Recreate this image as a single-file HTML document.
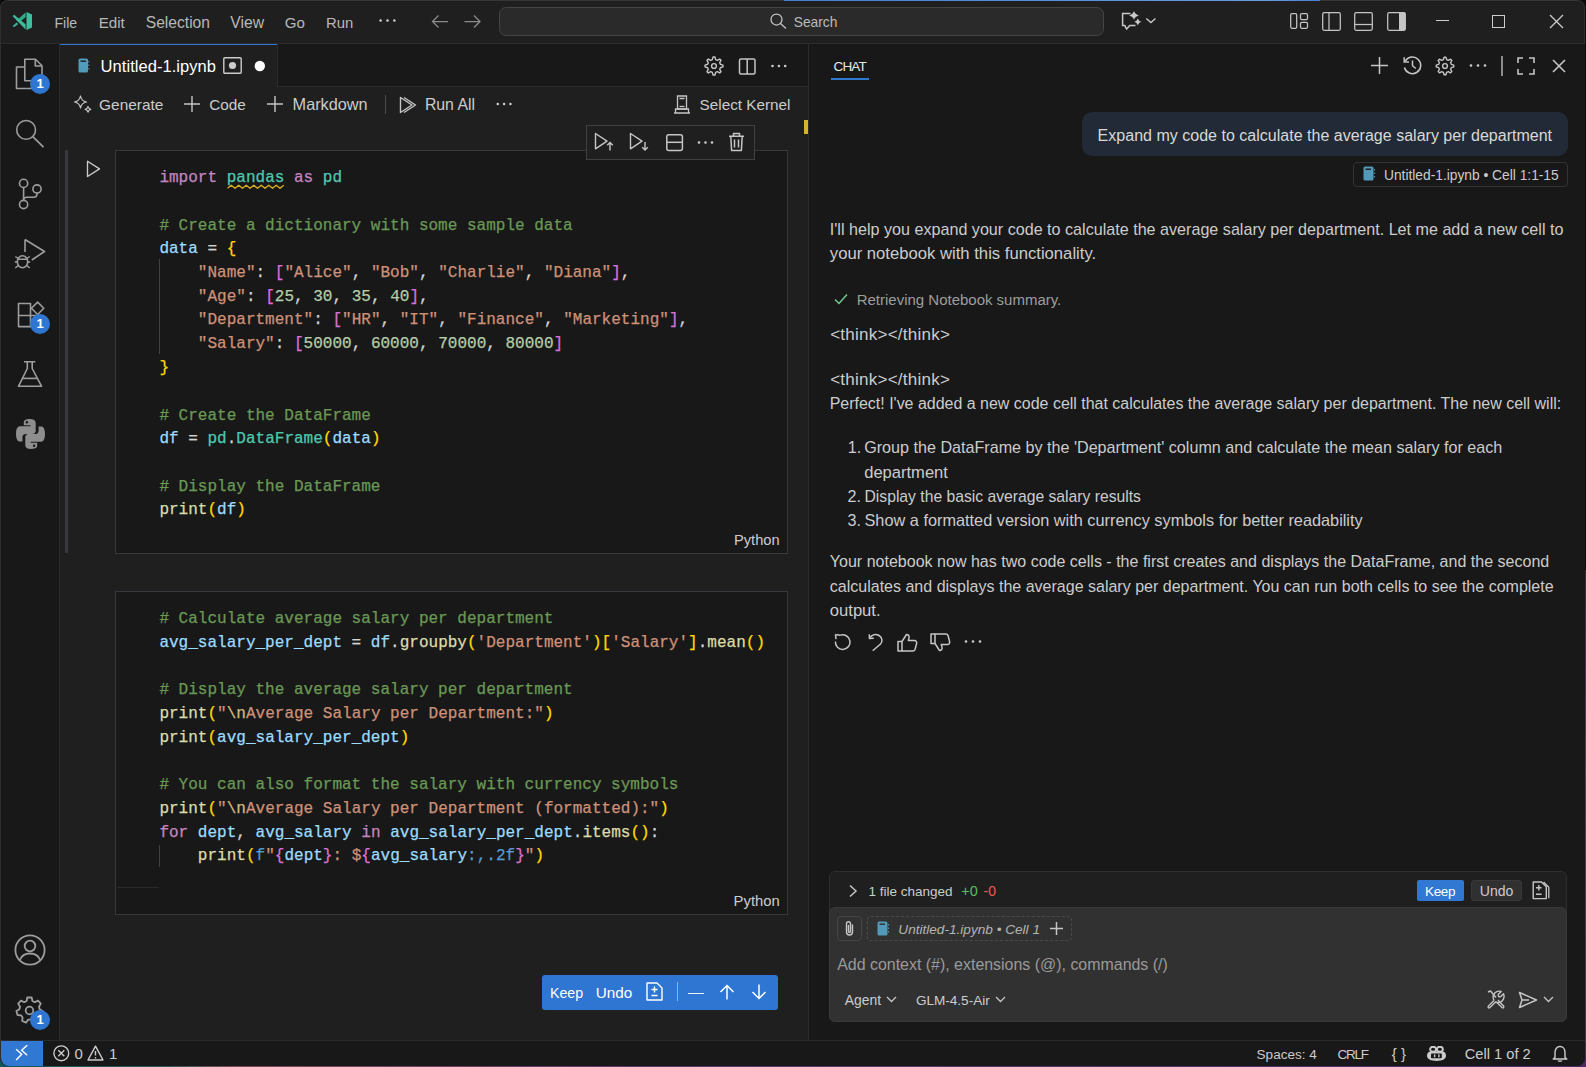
<!DOCTYPE html>
<html><head><meta charset="utf-8"><style>
html,body{margin:0;padding:0;width:1586px;height:1067px;overflow:hidden;background:#0d0d10}
.a{position:absolute;display:block}
.t{position:absolute;white-space:pre;margin:0;padding:0}
.s{font-family:"Liberation Sans", sans-serif}
.m{font-family:"Liberation Mono", monospace;-webkit-text-stroke:0.25px currentColor}
</style></head><body>
<div class="a" style="left:0px;top:0px;width:1586px;height:1067px;background:#0c0c0e"></div>
<div class="a" style="left:1585px;top:570px;width:1px;height:497px;background:linear-gradient(180deg,#3a2a4a,#5a3a78 40%,#4a2a68)"></div>
<div class="a" style="left:0px;top:600px;width:1px;height:467px;background:linear-gradient(180deg,#6a9ab8 0%,#6a9ab8 12%,#2a3a3a 13%,#2a4a4a 70%,#2a6a6a 100%)"></div>
<div class="a" style="left:0px;top:1058px;width:1586px;height:9px;background:linear-gradient(90deg,#0d5a5a,#2a5a5a 10%,#7a4a5a 15%,#5a3a6a 40%,#4a2a6a 100%)"></div>
<div class="a" style="left:0px;top:0px;width:1585px;height:1066px;background:#1f1f1f;border-radius:8px;overflow:hidden;box-shadow:inset 0 0 0 1px #2e2e2e"></div>
<div class="a" style="left:0px;top:43px;width:1585px;height:1px;background:#2b2b2b"></div>
<div class="a" style="left:8px;top:0px;width:1569px;height:1px;background:#363636"></div>
<div class="a" style="left:784px;top:0px;width:536px;height:1px;background:linear-gradient(90deg,#4a7cd0,#5b8fdc 50%,#6a9ae0 90%,#4a7cd0)"></div>
<div class="a" style="left:1px;top:44px;width:58px;height:996px;background:#181818"></div>
<div class="a" style="left:59px;top:44px;width:1px;height:996px;background:#2b2b2b"></div>
<div class="a" style="left:60px;top:44px;width:748px;height:42px;background:#181818"></div>
<div class="a" style="left:60px;top:86px;width:748px;height:1px;background:#2b2b2b"></div>
<div class="a" style="left:60px;top:44px;width:217px;height:43px;background:#1f1f1f"></div>
<div class="a" style="left:60px;top:44px;width:217px;height:1px;background:#3178d2"></div>
<div class="a" style="left:277px;top:44px;width:1px;height:42px;background:#2b2b2b"></div>
<div class="a" style="left:808px;top:44px;width:1px;height:996px;background:#2b2b2b"></div>
<div class="a" style="left:809px;top:44px;width:776px;height:996px;background:#181818"></div>
<div class="a" style="left:1px;top:1040px;width:1584px;height:26px;background:#181818;border-bottom-left-radius:8px;border-bottom-right-radius:8px"></div>
<div class="a" style="left:1px;top:1040px;width:1584px;height:1px;background:#2b2b2b"></div>
<div class="a" style="left:1px;top:1041px;width:42px;height:25px;background:#3178d2;border-bottom-left-radius:8px"></div>
<svg class="a" style="left:12px;top:11px;" width="21" height="20" viewBox="0 0 21 20" fill="none" stroke="#c5c5c5" stroke-width="1.25"><path d="M14.5 1 L20 3.5 V16.5 L14.5 19 Z" fill="#3fbfa0" stroke="none"/>
<path d="M13.6 1.6 V6.3 L7 11.5 L4.5 9.4 Z" fill="#31a888" stroke="none"/>
<path d="M0.5 5 L2.2 3.8 L13.6 13.2 V18.4 Z" fill="#3cbb9b" stroke="none"/>
<path d="M0.5 15 L4.6 11.5 L6.3 13 L2.2 16.3 Z" fill="#34b090" stroke="none"/></svg>
<div class="t s" style="left:54.50px;top:16.00px;font-size:14.078px;line-height:14.078px;color:#b8b8b8;letter-spacing:-0.000px;">File</div>
<div class="t s" style="left:98.70px;top:15.00px;font-size:15.152px;line-height:15.152px;color:#b8b8b8;letter-spacing:0.000px;">Edit</div>
<div class="t s" style="left:145.80px;top:15.00px;font-size:15.601px;line-height:15.601px;color:#b8b8b8;letter-spacing:0.000px;">Selection</div>
<div class="t s" style="left:230.30px;top:15.00px;font-size:15.749px;line-height:15.749px;color:#b8b8b8;letter-spacing:0.000px;">View</div>
<div class="t s" style="left:284.70px;top:15.00px;font-size:15.131px;line-height:15.131px;color:#b8b8b8;letter-spacing:0.000px;">Go</div>
<div class="t s" style="left:326.10px;top:16.00px;font-size:14.877px;line-height:14.877px;color:#b8b8b8;letter-spacing:0.000px;">Run</div>
<svg class="a" style="left:379px;top:18px;" width="17" height="5" viewBox="0 0 17 5" fill="none" stroke="#c5c5c5" stroke-width="1.25"><circle cx="1.6" cy="2.5" r="1.3" fill="#cccccc" stroke="none"/><circle cx="8.5" cy="2.5" r="1.3" fill="#cccccc" stroke="none"/><circle cx="15.4" cy="2.5" r="1.3" fill="#cccccc" stroke="none"/></svg>
<svg class="a" style="left:431px;top:14px;" width="18" height="15" viewBox="0 0 18 15" fill="none" stroke="#c5c5c5" stroke-width="1.25"><path d="M1.5 7.5 H17 M7.5 1.5 L1.5 7.5 L7.5 13.5" stroke="#8b8b8b"/></svg>
<svg class="a" style="left:464px;top:14px;" width="18" height="15" viewBox="0 0 18 15" fill="none" stroke="#c5c5c5" stroke-width="1.25"><path d="M0.5 7.5 H16 M10 1.5 L16 7.5 L10 13.5" stroke="#8b8b8b"/></svg>
<div class="a" style="left:499px;top:7px;width:605px;height:29px;background:#2a2a2a;border:1px solid #444444;border-radius:7px;box-sizing:border-box"></div>
<svg class="a" style="left:770px;top:13px;" width="17" height="16" viewBox="0 0 17 16" fill="none" stroke="#c5c5c5" stroke-width="1.25"><circle cx="6.5" cy="6.5" r="5.5"/><path d="M10.5 10.5 L16 15.5"/></svg>
<div class="t s" style="left:793.70px;top:16.00px;font-size:13.796px;line-height:13.796px;color:#bbbbbb;letter-spacing:0.000px;">Search</div>
<svg class="a" style="left:1121px;top:10px;" width="21" height="20" viewBox="0 0 21 20" fill="none" stroke="#c5c5c5" stroke-width="1.25"><path d="M9.5 3.6 H1.6 V15.6 H3.8 L5.6 19 L8.8 15.6 H14.5" stroke-width="1.5" stroke="#c8c8c8"/><path d="M13 1.0 Q14.08 4.43 17.9 5.4 Q14.08 6.37 13 9.8 Q11.92 6.37 8.1 5.4 Q11.92 4.43 13 1.0 Z" fill="#c8c8c8" stroke="none"/><path d="M16.8 8.4 Q17.59 11.05 20.400000000000002 11.8 Q17.59 12.55 16.8 15.200000000000001 Q16.01 12.55 13.200000000000001 11.8 Q16.01 11.05 16.8 8.4 Z" fill="#c8c8c8" stroke="none"/></svg>
<svg class="a" style="left:1145px;top:17px;" width="12" height="7" viewBox="0 0 12 7" fill="none" stroke="#c5c5c5" stroke-width="1.25"><path d="M1.3 1.4 L5.9 5.6 L10.5 1.4" stroke-width="1.4"/></svg>
<svg class="a" style="left:1290px;top:13px;" width="19" height="16" viewBox="0 0 19 16" fill="none" stroke="#c5c5c5" stroke-width="1.25"><rect x="0.7" y="0.7" width="6" height="14.6" rx="1.2"/><rect x="10.5" y="0.7" width="7" height="6" rx="1.2"/><rect x="10.5" y="9.3" width="7" height="6" rx="1.2"/></svg>
<svg class="a" style="left:1322px;top:12px;" width="19" height="19" viewBox="0 0 19 19" fill="none" stroke="#c5c5c5" stroke-width="1.25"><rect x="0.7" y="0.7" width="17.6" height="17.6" rx="1.5"/><path d="M7 0.7 V18.3"/></svg>
<svg class="a" style="left:1354px;top:12px;" width="19" height="19" viewBox="0 0 19 19" fill="none" stroke="#c5c5c5" stroke-width="1.25"><rect x="0.7" y="0.7" width="17.6" height="17.6" rx="1.5"/><path d="M0.7 12.5 H18.3"/></svg>
<svg class="a" style="left:1387px;top:12px;" width="19" height="19" viewBox="0 0 19 19" fill="none" stroke="#c5c5c5" stroke-width="1.25"><rect x="0.7" y="0.7" width="17.6" height="17.6" rx="1.5"/><rect x="12" y="0.7" width="6.3" height="17.6" fill="#c5c5c5" stroke="none"/></svg>
<div class="a" style="left:1436px;top:20px;width:13px;height:1px;background:#cccccc"></div>
<div class="a" style="left:1492px;top:15px;width:13px;height:13px;border:1px solid #cccccc;box-sizing:border-box"></div>
<svg class="a" style="left:1549px;top:14px;" width="15" height="15" viewBox="0 0 15 15" fill="none" stroke="#c5c5c5" stroke-width="1.25"><path d="M1 1 L14 14 M14 1 L1 14" stroke="#cccccc"/></svg>
<svg class="a" style="left:78px;top:58px;" width="12" height="15" viewBox="0 0 12 15" fill="none" stroke="#c5c5c5" stroke-width="1.25"><rect x="0.5" y="0.5" width="9.5" height="14" rx="1.6" fill="#519aba" stroke="none"/><rect x="2.5" y="2.5" width="5.5" height="1.4" fill="#1f1f1f" stroke="none"/><path d="M10.8 3 V4.5 M10.8 6.5 V8 M10.8 10 V11.5" stroke="#519aba" stroke-width="1"/></svg>
<div class="t s" style="left:100.60px;top:59.00px;font-size:16.536px;line-height:16.536px;color:#ffffff;letter-spacing:0.041px;">Untitled-1.ipynb</div>
<svg class="a" style="left:223px;top:57px;" width="19" height="17" viewBox="0 0 19 17" fill="none" stroke="#c5c5c5" stroke-width="1.25"><rect x="0.8" y="0.8" width="17.4" height="15.4" rx="1" stroke="#cccccc" stroke-width="1.4"/><circle cx="9.5" cy="8.5" r="3.6" fill="#cccccc" stroke="none"/></svg>
<svg class="a" style="left:254px;top:60px;" width="12" height="12" viewBox="0 0 12 12" fill="none" stroke="#c5c5c5" stroke-width="1.25"><circle cx="5.8" cy="6" r="5.2" fill="#ffffff" stroke="none"/></svg>
<svg class="a" style="left:703px;top:55px;" width="22" height="22" viewBox="0 0 22 22" fill="none" stroke="#c5c5c5" stroke-width="1.25"><circle cx="11" cy="11" r="2.4" stroke-width="1.4"/><path d="M9.29 4.62 L10.06 2.05 L11.94 2.05 L12.71 4.62 L14.30 5.28 L16.66 4.01 L17.99 5.34 L16.72 7.70 L17.38 9.29 L19.95 10.06 L19.95 11.94 L17.38 12.71 L16.72 14.30 L17.99 16.66 L16.66 17.99 L14.30 16.72 L12.71 17.38 L11.94 19.95 L10.06 19.95 L9.29 17.38 L7.70 16.72 L5.34 17.99 L4.01 16.66 L5.28 14.30 L4.62 12.71 L2.05 11.94 L2.05 10.06 L4.62 9.29 L5.28 7.70 L4.01 5.34 L5.34 4.01 L7.70 5.28 Z" stroke-linejoin="round" stroke-width="1.4"/></svg>
<svg class="a" style="left:738px;top:58px;" width="18" height="17" viewBox="0 0 18 17" fill="none" stroke="#c5c5c5" stroke-width="1.25"><rect x="1.5" y="1" width="15.5" height="15" rx="1.5" stroke-width="1.5"/><path d="M9.2 1 V16" stroke-width="1.5"/></svg>
<svg class="a" style="left:770px;top:64px;" width="18" height="5" viewBox="0 0 18 5" fill="none" stroke="#c5c5c5" stroke-width="1.25"><circle cx="2.5" cy="2" r="1.3" fill="#cccccc" stroke="none"/><circle cx="8.9" cy="2" r="1.3" fill="#cccccc" stroke="none"/><circle cx="15.2" cy="2" r="1.3" fill="#cccccc" stroke="none"/></svg>
<svg class="a" style="left:73px;top:95px;" width="20" height="19" viewBox="0 0 20 19" fill="none" stroke="#c5c5c5" stroke-width="1.25"><path d="M7.5 1 C8.1 4.6 9.6 6.2 13.5 7 C9.6 7.8 8.1 9.4 7.5 13 C6.9 9.4 5.4 7.8 1.5 7 C5.4 6.2 6.9 4.6 7.5 1 Z" stroke-linejoin="round"/><path d="M15 11.5 C15.3 13.2 16 13.9 17.8 14.3 C16 14.7 15.3 15.4 15 17.2 C14.7 15.4 14 14.7 12.2 14.3 C14 13.9 14.7 13.2 15 11.5 Z" stroke-linejoin="round"/></svg>
<div class="t s" style="left:99.10px;top:97.00px;font-size:15.42px;line-height:15.42px;color:#cccccc;letter-spacing:-0.000px;">Generate</div>
<svg class="a" style="left:183px;top:95px;" width="18" height="18" viewBox="0 0 18 18" fill="none" stroke="#c5c5c5" stroke-width="1.25"><path d="M9 1 V17 M1 9 H17" stroke-width="1.4"/></svg>
<div class="t s" style="left:209.30px;top:97.00px;font-size:15.314px;line-height:15.314px;color:#cccccc;letter-spacing:-0.000px;">Code</div>
<svg class="a" style="left:266px;top:95px;" width="18" height="18" viewBox="0 0 18 18" fill="none" stroke="#c5c5c5" stroke-width="1.25"><path d="M9 1 V17 M1 9 H17" stroke-width="1.4"/></svg>
<div class="t s" style="left:292.60px;top:96.00px;font-size:16.282px;line-height:16.282px;color:#cccccc;letter-spacing:-0.000px;">Markdown</div>
<div class="a" style="left:385px;top:95px;width:1px;height:19px;background:#4a4a4a"></div>
<svg class="a" style="left:399px;top:96px;" width="19" height="18" viewBox="0 0 19 18" fill="none" stroke="#c5c5c5" stroke-width="1.25"><path d="M1.5 1.5 L1.5 16.5 L13 9 Z" stroke-linejoin="round" stroke-width="1.4"/><path d="M5 1.5 L16.5 9 L5 16.5" stroke-linejoin="round" stroke-width="1.4"/></svg>
<div class="t s" style="left:424.90px;top:97.00px;font-size:15.848px;line-height:15.848px;color:#cccccc;letter-spacing:0.000px;">Run All</div>
<svg class="a" style="left:496px;top:102px;" width="18" height="5" viewBox="0 0 18 5" fill="none" stroke="#c5c5c5" stroke-width="1.25"><circle cx="1.8" cy="2" r="1.3" fill="#cccccc" stroke="none"/><circle cx="8.1" cy="2" r="1.3" fill="#cccccc" stroke="none"/><circle cx="14.4" cy="2" r="1.3" fill="#cccccc" stroke="none"/></svg>
<svg class="a" style="left:673px;top:95px;" width="18" height="19" viewBox="0 0 18 19" fill="none" stroke="#c5c5c5" stroke-width="1.25"><path d="M4.5 1 H13.5 V14 H4.5 Z M6.5 3.5 H11.5" stroke-width="1.3"/><path d="M6.5 11.5 H11.5" stroke-width="1.3"/><path d="M1 18 H17 M2.5 18 V14 H15.5 V18" stroke-width="1.3"/></svg>
<div class="t s" style="left:699.60px;top:97.00px;font-size:15.284px;line-height:15.284px;color:#cccccc;letter-spacing:-0.000px;">Select Kernel</div>
<div class="a" style="left:804px;top:120px;width:4px;height:14px;background:#d8b32a"></div>
<div class="a" style="left:65px;top:150px;width:3px;height:403px;background:#393940;border-radius:1px"></div>
<div class="a" style="left:115px;top:150px;width:673px;height:404px;background:#181818;border:1px solid #37373d;box-sizing:border-box"></div>
<svg class="a" style="left:86px;top:160px;" width="15" height="18" viewBox="0 0 15 18" fill="none" stroke="#c5c5c5" stroke-width="1.25"><path d="M1.5 1.2 V16.5 L13.5 8.9 Z" stroke="#cccccc" stroke-width="1.35" stroke-linejoin="round"/></svg>
<div class="t m" style="left:159.40px;top:170.00px;font-size:16.03px;line-height:16.03px;color:#d4d4d4;"><span style="color:#c586c0">import</span><span style="color:#d4d4d4"> </span><span style="color:#4ec9b0">pandas</span><span style="color:#d4d4d4"> </span><span style="color:#c586c0">as</span><span style="color:#d4d4d4"> </span><span style="color:#4ec9b0">pd</span></div>
<div class="t m" style="left:159.40px;top:218.00px;font-size:16.03px;line-height:16.03px;color:#d4d4d4;"><span style="color:#6a9955"># Create a dictionary with some sample data</span></div>
<div class="t m" style="left:159.40px;top:241.00px;font-size:16.03px;line-height:16.03px;color:#d4d4d4;"><span style="color:#9cdcfe">data</span><span style="color:#d4d4d4"> = </span><span style="color:#ffd700">{</span></div>
<div class="t m" style="left:159.40px;top:265.00px;font-size:16.03px;line-height:16.03px;color:#d4d4d4;"><span style="color:#d4d4d4">    </span><span style="color:#ce9178">&quot;Name&quot;</span><span style="color:#d4d4d4">: </span><span style="color:#da70d6">[</span><span style="color:#ce9178">&quot;Alice&quot;</span><span style="color:#d4d4d4">, </span><span style="color:#ce9178">&quot;Bob&quot;</span><span style="color:#d4d4d4">, </span><span style="color:#ce9178">&quot;Charlie&quot;</span><span style="color:#d4d4d4">, </span><span style="color:#ce9178">&quot;Diana&quot;</span><span style="color:#da70d6">]</span><span style="color:#d4d4d4">,</span></div>
<div class="t m" style="left:159.40px;top:289.00px;font-size:16.03px;line-height:16.03px;color:#d4d4d4;"><span style="color:#d4d4d4">    </span><span style="color:#ce9178">&quot;Age&quot;</span><span style="color:#d4d4d4">: </span><span style="color:#da70d6">[</span><span style="color:#b5cea8">25</span><span style="color:#d4d4d4">, </span><span style="color:#b5cea8">30</span><span style="color:#d4d4d4">, </span><span style="color:#b5cea8">35</span><span style="color:#d4d4d4">, </span><span style="color:#b5cea8">40</span><span style="color:#da70d6">]</span><span style="color:#d4d4d4">,</span></div>
<div class="t m" style="left:159.40px;top:312.00px;font-size:16.03px;line-height:16.03px;color:#d4d4d4;"><span style="color:#d4d4d4">    </span><span style="color:#ce9178">&quot;Department&quot;</span><span style="color:#d4d4d4">: </span><span style="color:#da70d6">[</span><span style="color:#ce9178">&quot;HR&quot;</span><span style="color:#d4d4d4">, </span><span style="color:#ce9178">&quot;IT&quot;</span><span style="color:#d4d4d4">, </span><span style="color:#ce9178">&quot;Finance&quot;</span><span style="color:#d4d4d4">, </span><span style="color:#ce9178">&quot;Marketing&quot;</span><span style="color:#da70d6">]</span><span style="color:#d4d4d4">,</span></div>
<div class="t m" style="left:159.40px;top:336.00px;font-size:16.03px;line-height:16.03px;color:#d4d4d4;"><span style="color:#d4d4d4">    </span><span style="color:#ce9178">&quot;Salary&quot;</span><span style="color:#d4d4d4">: </span><span style="color:#da70d6">[</span><span style="color:#b5cea8">50000</span><span style="color:#d4d4d4">, </span><span style="color:#b5cea8">60000</span><span style="color:#d4d4d4">, </span><span style="color:#b5cea8">70000</span><span style="color:#d4d4d4">, </span><span style="color:#b5cea8">80000</span><span style="color:#da70d6">]</span></div>
<div class="t m" style="left:159.40px;top:360.00px;font-size:16.03px;line-height:16.03px;color:#d4d4d4;"><span style="color:#ffd700">}</span></div>
<div class="t m" style="left:159.40px;top:408.00px;font-size:16.03px;line-height:16.03px;color:#d4d4d4;"><span style="color:#6a9955"># Create the DataFrame</span></div>
<div class="t m" style="left:159.40px;top:431.00px;font-size:16.03px;line-height:16.03px;color:#d4d4d4;"><span style="color:#9cdcfe">df</span><span style="color:#d4d4d4"> = </span><span style="color:#4ec9b0">pd</span><span style="color:#d4d4d4">.</span><span style="color:#4ec9b0">DataFrame</span><span style="color:#ffd700">(</span><span style="color:#9cdcfe">data</span><span style="color:#ffd700">)</span></div>
<div class="t m" style="left:159.40px;top:479.00px;font-size:16.03px;line-height:16.03px;color:#d4d4d4;"><span style="color:#6a9955"># Display the DataFrame</span></div>
<div class="t m" style="left:159.40px;top:502.00px;font-size:16.03px;line-height:16.03px;color:#d4d4d4;"><span style="color:#dcdcaa">print</span><span style="color:#ffd700">(</span><span style="color:#9cdcfe">df</span><span style="color:#ffd700">)</span></div>
<div class="a" style="left:159px;top:259px;width:1px;height:95px;background:#404040"></div>
<svg class="a" style="left:226px;top:184px;" width="60" height="6" viewBox="0 0 60 6" fill="none" stroke="#c5c5c5" stroke-width="1.25"><path d="M1.5 4.2 L5.25 1.3 L9.00 4.2 L12.75 1.3 L16.50 4.2 L20.25 1.3 L24.00 4.2 L27.75 1.3 L31.50 4.2 L35.25 1.3 L39.00 4.2 L42.75 1.3 L46.50 4.2 L50.25 1.3 L54.00 4.2 L57.75 1.3" stroke="#d2ac1c" stroke-width="1.45" stroke-linejoin="round"/></svg>
<div class="t s" style="left:734.00px;top:533.00px;font-size:14.683px;line-height:14.683px;color:#cccccc;letter-spacing:-0.000px;">Python</div>
<div class="a" style="left:586px;top:125px;width:169px;height:35px;background:#1f1f1f;border:1px solid #404040;box-sizing:border-box"></div>
<svg class="a" style="left:594px;top:132px;" width="21" height="20" viewBox="0 0 21 20" fill="none" stroke="#c5c5c5" stroke-width="1.25"><path d="M1.5 1.5 V16.8 L13 9.1 Z" stroke-linejoin="round" stroke-width="1.4"/><path d="M16 18.5 V10.5 M13.2 13.2 L16 10.4 L18.8 13.2" stroke-width="1.4"/></svg>
<svg class="a" style="left:629px;top:132px;" width="21" height="20" viewBox="0 0 21 20" fill="none" stroke="#c5c5c5" stroke-width="1.25"><path d="M1.5 1.5 V16.8 L13 9.1 Z" stroke-linejoin="round" stroke-width="1.4"/><path d="M16 10 V18 M13.2 15.3 L16 18.1 L18.8 15.3" stroke-width="1.4"/></svg>
<svg class="a" style="left:666px;top:134px;" width="18" height="18" viewBox="0 0 18 18" fill="none" stroke="#c5c5c5" stroke-width="1.25"><rect x="0.8" y="0.8" width="15.6" height="15.8" rx="2" stroke-width="1.5"/><path d="M0.8 8.3 H16.4" stroke-width="1.5"/></svg>
<svg class="a" style="left:697px;top:140px;" width="17" height="5" viewBox="0 0 17 5" fill="none" stroke="#c5c5c5" stroke-width="1.25"><circle cx="2" cy="2.5" r="1.3" fill="#cccccc" stroke="none"/><circle cx="8.5" cy="2.5" r="1.3" fill="#cccccc" stroke="none"/><circle cx="15" cy="2.5" r="1.3" fill="#cccccc" stroke="none"/></svg>
<svg class="a" style="left:728px;top:132px;" width="17" height="20" viewBox="0 0 17 20" fill="none" stroke="#c5c5c5" stroke-width="1.25"><path d="M1 4.2 H16 M5.5 4 V1.5 H11.5 V4 M2.8 4.5 L3.6 18.5 H13.4 L14.2 4.5 M6.5 7.5 V15.5 M10.5 7.5 V15.5" stroke-width="1.5" stroke-linejoin="round"/></svg>
<div class="a" style="left:115px;top:591px;width:673px;height:324px;background:#181818;border:1px solid #37373d;box-sizing:border-box"></div>
<div class="t m" style="left:159.40px;top:611.00px;font-size:16.03px;line-height:16.03px;color:#d4d4d4;"><span style="color:#6a9955"># Calculate average salary per department</span></div>
<div class="t m" style="left:159.40px;top:635.00px;font-size:16.03px;line-height:16.03px;color:#d4d4d4;"><span style="color:#9cdcfe">avg_salary_per_dept</span><span style="color:#d4d4d4"> = </span><span style="color:#9cdcfe">df</span><span style="color:#d4d4d4">.</span><span style="color:#dcdcaa">groupby</span><span style="color:#ffd700">(</span><span style="color:#ce9178">&#x27;Department&#x27;</span><span style="color:#ffd700">)</span><span style="color:#ffd700">[</span><span style="color:#ce9178">&#x27;Salary&#x27;</span><span style="color:#ffd700">]</span><span style="color:#d4d4d4">.</span><span style="color:#dcdcaa">mean</span><span style="color:#ffd700">()</span></div>
<div class="t m" style="left:159.40px;top:682.00px;font-size:16.03px;line-height:16.03px;color:#d4d4d4;"><span style="color:#6a9955"># Display the average salary per department</span></div>
<div class="t m" style="left:159.40px;top:706.00px;font-size:16.03px;line-height:16.03px;color:#d4d4d4;"><span style="color:#dcdcaa">print</span><span style="color:#ffd700">(</span><span style="color:#ce9178">&quot;</span><span style="color:#d7ba7d">\n</span><span style="color:#ce9178">Average Salary per Department:&quot;</span><span style="color:#ffd700">)</span></div>
<div class="t m" style="left:159.40px;top:730.00px;font-size:16.03px;line-height:16.03px;color:#d4d4d4;"><span style="color:#dcdcaa">print</span><span style="color:#ffd700">(</span><span style="color:#9cdcfe">avg_salary_per_dept</span><span style="color:#ffd700">)</span></div>
<div class="t m" style="left:159.40px;top:777.00px;font-size:16.03px;line-height:16.03px;color:#d4d4d4;"><span style="color:#6a9955"># You can also format the salary with currency symbols</span></div>
<div class="t m" style="left:159.40px;top:801.00px;font-size:16.03px;line-height:16.03px;color:#d4d4d4;"><span style="color:#dcdcaa">print</span><span style="color:#ffd700">(</span><span style="color:#ce9178">&quot;</span><span style="color:#d7ba7d">\n</span><span style="color:#ce9178">Average Salary per Department (formatted):&quot;</span><span style="color:#ffd700">)</span></div>
<div class="t m" style="left:159.40px;top:825.00px;font-size:16.03px;line-height:16.03px;color:#d4d4d4;"><span style="color:#c586c0">for</span><span style="color:#d4d4d4"> </span><span style="color:#9cdcfe">dept</span><span style="color:#d4d4d4">, </span><span style="color:#9cdcfe">avg_salary</span><span style="color:#d4d4d4"> </span><span style="color:#c586c0">in</span><span style="color:#d4d4d4"> </span><span style="color:#9cdcfe">avg_salary_per_dept</span><span style="color:#d4d4d4">.</span><span style="color:#dcdcaa">items</span><span style="color:#ffd700">()</span><span style="color:#d4d4d4">:</span></div>
<div class="t m" style="left:159.40px;top:848.00px;font-size:16.03px;line-height:16.03px;color:#d4d4d4;"><span style="color:#d4d4d4">    </span><span style="color:#dcdcaa">print</span><span style="color:#ffd700">(</span><span style="color:#569cd6">f</span><span style="color:#ce9178">&quot;</span><span style="color:#da70d6">{</span><span style="color:#9cdcfe">dept</span><span style="color:#da70d6">}</span><span style="color:#ce9178">: $</span><span style="color:#da70d6">{</span><span style="color:#9cdcfe">avg_salary</span><span style="color:#569cd6">:,.2f</span><span style="color:#da70d6">}</span><span style="color:#ce9178">&quot;</span><span style="color:#ffd700">)</span></div>
<div class="a" style="left:159px;top:845px;width:1px;height:22px;background:#404040"></div>
<div class="a" style="left:117px;top:887px;width:42px;height:1px;background:#2a2a2a"></div>
<div class="t s" style="left:733.60px;top:894.00px;font-size:14.843px;line-height:14.843px;color:#cccccc;letter-spacing:0.000px;">Python</div>
<div class="a" style="left:542px;top:975px;width:236px;height:35px;background:#2f76d2;border-radius:3px"></div>
<div class="t s" style="left:550.00px;top:986.00px;font-size:14.218px;line-height:14.218px;color:#ffffff;letter-spacing:0.000px;">Keep</div>
<div class="t s" style="left:595.70px;top:985.00px;font-size:15.272px;line-height:15.272px;color:#ffffff;letter-spacing:-0.000px;">Undo</div>
<svg class="a" style="left:646px;top:982px;" width="17" height="19" viewBox="0 0 17 19" fill="none" stroke="#c5c5c5" stroke-width="1.25"><path d="M1 1 H11 L16 6 V18 H1 Z" stroke="#ffffff" stroke-width="1.4" stroke-linejoin="round"/><path d="M8.5 4.5 V10.5 M5.5 7.5 H11.5 M5.5 13.5 H11.5" stroke="#ffffff" stroke-width="1.4"/></svg>
<div class="a" style="left:677px;top:982px;width:1px;height:19px;background:#8fb3e6"></div>
<div class="a" style="left:688px;top:992.5px;width:16px;height:1.2px;background:#f0f0f0"></div>
<svg class="a" style="left:719px;top:984px;" width="16" height="16" viewBox="0 0 16 16" fill="none" stroke="#c5c5c5" stroke-width="1.25"><path d="M8 15.5 V1.5 M1.5 8 L8 1.5 L14.5 8" stroke="#ffffff" stroke-width="1.5"/></svg>
<svg class="a" style="left:751px;top:984px;" width="16" height="16" viewBox="0 0 16 16" fill="none" stroke="#c5c5c5" stroke-width="1.25"><path d="M8 0.5 V14.5 M1.5 8 L8 14.5 L14.5 8" stroke="#ffffff" stroke-width="1.5"/></svg>
<div class="t s" style="left:833.50px;top:60.00px;font-size:13.5px;line-height:13.5px;color:#e7e7e7;letter-spacing:-0.814px;">CHAT</div>
<div class="a" style="left:831px;top:78px;width:38px;height:2px;background:#3178d2"></div>
<svg class="a" style="left:1370px;top:56px;" width="19" height="19" viewBox="0 0 19 19" fill="none" stroke="#c5c5c5" stroke-width="1.25"><path d="M9.5 1 V18 M1 9.5 H18" stroke-width="1.5"/></svg>
<svg class="a" style="left:1402px;top:55px;" width="21" height="21" viewBox="0 0 21 21" fill="none" stroke="#c5c5c5" stroke-width="1.25"><path d="M3.2 6.2 A8.3 8.3 0 1 1 2.4 12.5" stroke-width="1.5"/><path d="M2.2 2.2 V7 H7" stroke-width="1.5"/><path d="M10.5 5.5 V10.7 L13.8 13.5" stroke-width="1.5"/></svg>
<svg class="a" style="left:1434px;top:55px;" width="22" height="22" viewBox="0 0 22 22" fill="none" stroke="#c5c5c5" stroke-width="1.25"><circle cx="11" cy="11" r="2.4" stroke-width="1.4"/><path d="M9.32 4.72 L10.08 2.25 L11.92 2.25 L12.68 4.72 L14.25 5.37 L16.54 4.16 L17.84 5.46 L16.63 7.75 L17.28 9.32 L19.75 10.08 L19.75 11.92 L17.28 12.68 L16.63 14.25 L17.84 16.54 L16.54 17.84 L14.25 16.63 L12.68 17.28 L11.92 19.75 L10.08 19.75 L9.32 17.28 L7.75 16.63 L5.46 17.84 L4.16 16.54 L5.37 14.25 L4.72 12.68 L2.25 11.92 L2.25 10.08 L4.72 9.32 L5.37 7.75 L4.16 5.46 L5.46 4.16 L7.75 5.37 Z" stroke-linejoin="round" stroke-width="1.4"/></svg>
<svg class="a" style="left:1469px;top:63px;" width="18" height="5" viewBox="0 0 18 5" fill="none" stroke="#c5c5c5" stroke-width="1.25"><circle cx="2" cy="2.5" r="1.3" fill="#cccccc" stroke="none"/><circle cx="9" cy="2.5" r="1.3" fill="#cccccc" stroke="none"/><circle cx="16" cy="2.5" r="1.3" fill="#cccccc" stroke="none"/></svg>
<div class="a" style="left:1501px;top:56px;width:1.5px;height:20px;background:#8a8a8a"></div>
<svg class="a" style="left:1517px;top:57px;" width="18" height="18" viewBox="0 0 18 18" fill="none" stroke="#c5c5c5" stroke-width="1.25"><path d="M1 6 V1 H6 M12 1 H17 V6 M17 12 V17 H12 M6 17 H1 V12" stroke-width="1.6"/></svg>
<svg class="a" style="left:1552px;top:59px;" width="14" height="14" viewBox="0 0 14 14" fill="none" stroke="#c5c5c5" stroke-width="1.25"><path d="M1 1 L13 13 M13 1 L1 13" stroke-width="1.6"/></svg>
<div class="a" style="left:1082px;top:112px;width:486px;height:44px;background:#212a36;border-radius:10px"></div>
<div class="t s" style="left:1097.60px;top:127.00px;font-size:16.046px;line-height:16.046px;color:#d8d8d8;letter-spacing:-0.000px;">Expand my code to calculate the average salary per department</div>
<div class="a" style="left:1353px;top:162px;width:215px;height:25px;border:1px solid #333333;border-radius:4px;box-sizing:border-box"></div>
<svg class="a" style="left:1363px;top:166px;" width="13" height="15" viewBox="0 0 13 15" fill="none" stroke="#c5c5c5" stroke-width="1.25"><rect x="0.5" y="0.5" width="10" height="14" rx="1.6" fill="#519aba" stroke="none"/><rect x="2.5" y="2.5" width="5.5" height="1.4" fill="#181818" stroke="none"/><path d="M11.6 3 V4.5 M11.6 6.5 V8 M11.6 10 V11.5" stroke="#519aba" stroke-width="1"/></svg>
<div class="t s" style="left:1384.00px;top:169.00px;font-size:13.775px;line-height:13.775px;color:#cccccc;letter-spacing:-0.000px;">Untitled-1.ipynb • Cell 1:1-15</div>
<div class="t s" style="left:829.80px;top:221.00px;font-size:16.144px;line-height:16.144px;color:#cccccc;letter-spacing:-0.000px;">I&#x27;ll help you expand your code to calculate the average salary per department. Let me add a new cell to</div>
<div class="t s" style="left:829.80px;top:246.00px;font-size:16.667px;line-height:16.667px;color:#cccccc;letter-spacing:-0.000px;">your notebook with this functionality.</div>
<svg class="a" style="left:834px;top:293px;" width="14" height="12" viewBox="0 0 14 12" fill="none" stroke="#c5c5c5" stroke-width="1.25"><path d="M1 6.5 L5 10.5 L13 1.5" stroke="#73c991" stroke-width="1.5"/></svg>
<div class="t s" style="left:856.70px;top:292.00px;font-size:14.994px;line-height:14.994px;color:#9d9d9d;letter-spacing:-0.000px;">Retrieving Notebook summary.</div>
<div class="t s" style="left:830.20px;top:326.00px;font-size:17.066px;line-height:17.066px;color:#cccccc;letter-spacing:0.222px;">&lt;think&gt;&lt;/think&gt;</div>
<div class="t s" style="left:830.20px;top:371.00px;font-size:17.066px;line-height:17.066px;color:#cccccc;letter-spacing:0.222px;">&lt;think&gt;&lt;/think&gt;</div>
<div class="t s" style="left:829.70px;top:396.00px;font-size:15.981px;line-height:15.981px;color:#cccccc;letter-spacing:0.000px;">Perfect! I&#x27;ve added a new code cell that calculates the average salary per department. The new cell will:</div>
<div class="t s" style="left:847.80px;top:439.00px;font-size:16.1px;line-height:16.1px;color:#cccccc;">1.</div>
<div class="t s" style="left:864.20px;top:439.00px;font-size:16.131px;line-height:16.131px;color:#cccccc;letter-spacing:-0.000px;">Group the DataFrame by the &#x27;Department&#x27; column and calculate the mean salary for each</div>
<div class="t s" style="left:864.20px;top:465.00px;font-size:16.561px;line-height:16.561px;color:#cccccc;letter-spacing:0.000px;">department</div>
<div class="t s" style="left:847.50px;top:488.00px;font-size:16.1px;line-height:16.1px;color:#cccccc;">2.</div>
<div class="t s" style="left:864.50px;top:489.00px;font-size:15.692px;line-height:15.692px;color:#cccccc;letter-spacing:0.000px;">Display the basic average salary results</div>
<div class="t s" style="left:847.50px;top:512.00px;font-size:16.1px;line-height:16.1px;color:#cccccc;">3.</div>
<div class="t s" style="left:864.50px;top:512.00px;font-size:16.317px;line-height:16.317px;color:#cccccc;letter-spacing:-0.000px;">Show a formatted version with currency symbols for better readability</div>
<div class="t s" style="left:829.80px;top:553.00px;font-size:16.056px;line-height:16.056px;color:#cccccc;letter-spacing:0.000px;">Your notebook now has two code cells - the first creates and displays the DataFrame, and the second</div>
<div class="t s" style="left:829.80px;top:578.00px;font-size:16.028px;line-height:16.028px;color:#cccccc;letter-spacing:0.000px;">calculates and displays the average salary per department. You can run both cells to see the complete</div>
<div class="t s" style="left:829.80px;top:603.00px;font-size:16.615px;line-height:16.615px;color:#cccccc;letter-spacing:-0.000px;">output.</div>
<svg class="a" style="left:833px;top:633px;" width="19" height="19" viewBox="0 0 19 19" fill="none" stroke="#c5c5c5" stroke-width="1.25"><path d="M7.2 2.24 A7.3 7.3 0 1 1 2.43 8.46" stroke-width="1.5"/><path d="M2.4 1.6 L7 2.3 M2.4 1.6 L3.1 6.2" stroke-width="1.5"/></svg>
<svg class="a" style="left:867px;top:633px;" width="17" height="19" viewBox="0 0 17 19" fill="none" stroke="#c5c5c5" stroke-width="1.25"><path d="M2.5 5.3 C5 1.5 9 0.8 12 2.5 C15.5 4.5 15.8 8.5 13.5 11 L5.7 17.8" stroke-width="1.5"/><path d="M2.3 1.2 L2.5 5.5 L6.8 5.3" stroke-width="1.5"/></svg>
<svg class="a" style="left:897px;top:633px;" width="21" height="19" viewBox="0 0 21 19" fill="none" stroke="#c5c5c5" stroke-width="1.25"><path d="M1 8.5 H5 V18 H1 Z" stroke-width="1.5" stroke-linejoin="round"/><path d="M5 8.5 L9.5 1.5 C11.5 1.5 12.5 3 12 5 L11.3 7.5 H17.5 C19 7.5 20 9 19.6 10.5 L18 16.5 C17.7 17.5 16.9 18 15.8 18 H5" stroke-width="1.5" stroke-linejoin="round"/></svg>
<svg class="a" style="left:930px;top:633px;" width="21" height="19" viewBox="0 0 21 19" fill="none" stroke="#c5c5c5" stroke-width="1.25"><path d="M1 1 H5 V10.5 H1 Z" stroke-width="1.5" stroke-linejoin="round"/><path d="M5 10.5 L9.5 17.5 C11.5 17.5 12.5 16 12 14 L11.3 11.5 H17.5 C19 11.5 20 10 19.6 8.5 L18 2.5 C17.7 1.5 16.9 1 15.8 1 H5" stroke-width="1.5" stroke-linejoin="round"/></svg>
<svg class="a" style="left:964px;top:639px;" width="18" height="5" viewBox="0 0 18 5" fill="none" stroke="#c5c5c5" stroke-width="1.25"><circle cx="2" cy="2.5" r="1.3" fill="#cccccc" stroke="none"/><circle cx="9" cy="2.5" r="1.3" fill="#cccccc" stroke="none"/><circle cx="16" cy="2.5" r="1.3" fill="#cccccc" stroke="none"/></svg>
<div class="a" style="left:829px;top:871px;width:738px;height:151px;background:#1f1f1f;border:1px solid #2e2e2e;border-radius:6px;box-sizing:border-box"></div>
<div class="a" style="left:829px;top:907px;width:738px;height:115px;background:#313131;border:1px solid #3a3a3a;border-radius:6px;box-sizing:border-box"></div>
<svg class="a" style="left:848px;top:884px;" width="11" height="14" viewBox="0 0 11 14" fill="none" stroke="#c5c5c5" stroke-width="1.25"><path d="M2 1.5 L8 7 L2 12.5" stroke-width="1.5"/></svg>
<div class="t s" style="left:868.50px;top:885.00px;font-size:13.5px;line-height:13.5px;color:#cccccc;letter-spacing:-0.005px;">1 file changed</div>
<div class="t s" style="left:961.30px;top:884.00px;font-size:14.386px;line-height:14.386px;color:#5cc05a;letter-spacing:-0.000px;">+0</div>
<div class="t s" style="left:983.50px;top:885.00px;font-size:13.933px;line-height:13.933px;color:#f05a5a;letter-spacing:-0.000px;">-0</div>
<div class="a" style="left:1417px;top:880px;width:47px;height:21px;background:#3178d2;border-radius:2px"></div>
<div class="t s" style="left:1425.00px;top:885.00px;font-size:13.5px;line-height:13.5px;color:#ffffff;letter-spacing:-0.374px;">Keep</div>
<div class="a" style="left:1471px;top:880px;width:51px;height:21px;background:#303030;border:1px solid #383838;border-radius:3px;box-sizing:border-box"></div>
<div class="t s" style="left:1479.80px;top:884.00px;font-size:14.059px;line-height:14.059px;color:#cccccc;letter-spacing:-0.000px;">Undo</div>
<svg class="a" style="left:1532px;top:881px;" width="19" height="19" viewBox="0 0 19 19" fill="none" stroke="#c5c5c5" stroke-width="1.25"><path d="M1.2 1 H9.5 L14.3 5.8 V17.6 H1.2 Z" stroke-width="1.4" stroke-linejoin="round"/><path d="M11.6 1 L16.8 6.2 V17.2" stroke-width="1.3"/><path d="M6.8 4 V9.6 M4 6.8 H9.6 M4 13.3 H9.6" stroke-width="1.4"/></svg>
<div class="a" style="left:837px;top:916px;width:25px;height:25px;border:1px solid #454545;border-radius:4px;box-sizing:border-box"></div>
<svg class="a" style="left:843px;top:920px;" width="13" height="17" viewBox="0 0 13 17" fill="none" stroke="#c5c5c5" stroke-width="1.25"><path d="M9.5 5 V12 A3 3 0 0 1 3.5 12 V3.8 A2 2 0 0 1 7.5 3.8 V11.5 A1 1 0 0 1 5.5 11.5 V5.5" stroke-width="1.4" stroke-linecap="round"/></svg>
<div class="a" style="left:867px;top:916px;width:205px;height:25px;border:1px dashed #4a4a4a;border-radius:4px;box-sizing:border-box"></div>
<svg class="a" style="left:877px;top:921px;" width="13" height="15" viewBox="0 0 13 15" fill="none" stroke="#c5c5c5" stroke-width="1.25"><rect x="0.5" y="0.5" width="10" height="14" rx="1.6" fill="#519aba" stroke="none"/><rect x="2.5" y="2.5" width="5.5" height="1.4" fill="#313131" stroke="none"/><path d="M11.6 3 V4.5 M11.6 6.5 V8 M11.6 10 V11.5" stroke="#519aba" stroke-width="1"/></svg>
<div class="t s" style="left:898.30px;top:923.00px;font-size:13.612px;line-height:13.612px;color:#b4b4b4;letter-spacing:-0.000px;font-style:italic;">Untitled-1.ipynb • Cell 1</div>
<svg class="a" style="left:1049px;top:921px;" width="15" height="15" viewBox="0 0 15 15" fill="none" stroke="#c5c5c5" stroke-width="1.25"><path d="M7.5 1 V14 M1 7.5 H14" stroke-width="1.5"/></svg>
<div class="t s" style="left:837.20px;top:957.00px;font-size:15.951px;line-height:15.951px;color:#9a9a9a;letter-spacing:-0.000px;">Add context (#), extensions (@), commands (/)</div>
<div class="t s" style="left:844.80px;top:994.00px;font-size:13.895px;line-height:13.895px;color:#cccccc;letter-spacing:-0.000px;">Agent</div>
<svg class="a" style="left:886px;top:996px;" width="11" height="7" viewBox="0 0 11 7" fill="none" stroke="#c5c5c5" stroke-width="1.25"><path d="M1 1 L5.5 5.5 L10 1" stroke-width="1.3"/></svg>
<div class="t s" style="left:915.90px;top:994.00px;font-size:13.572px;line-height:13.572px;color:#cccccc;letter-spacing:0.000px;">GLM-4.5-Air</div>
<svg class="a" style="left:995px;top:996px;" width="11" height="7" viewBox="0 0 11 7" fill="none" stroke="#c5c5c5" stroke-width="1.25"><path d="M1 1 L5.5 5.5 L10 1" stroke-width="1.3"/></svg>
<svg class="a" style="left:1486px;top:990px;" width="20" height="20" viewBox="0 0 20 20" fill="none" stroke="#c5c5c5" stroke-width="1.25"><path d="M2 2 L4.5 1 L10 7.5 M12 10 L17.5 16 C18.5 17.2 17.2 18.5 16 17.5 L10.5 12" stroke-width="1.4" stroke-linejoin="round"/><path d="M8 10.5 L2.5 16 C1.5 17.2 2.8 18.5 4 17.5 L9.5 12 C12 13 15 12.5 16.5 10.5 C18 8.5 18.5 6 17.5 3.8 L14.5 6.8 L12.5 6.5 L12.2 4.5 L15.2 1.5 C13 0.8 10.5 1.3 8.8 3 C7 5 6.8 8 8 10.5" stroke-width="1.4" stroke-linejoin="round"/></svg>
<svg class="a" style="left:1518px;top:991px;" width="20" height="18" viewBox="0 0 20 18" fill="none" stroke="#c5c5c5" stroke-width="1.25"><path d="M1.5 1.5 L18.5 9 L1.5 16.5 L4 9 Z M4 9 H11" stroke-width="1.5" stroke-linejoin="round"/></svg>
<svg class="a" style="left:1543px;top:996px;" width="11" height="7" viewBox="0 0 11 7" fill="none" stroke="#c5c5c5" stroke-width="1.25"><path d="M1 1 L5.5 5.5 L10 1" stroke-width="1.3"/></svg>
<svg class="a" style="left:15px;top:58px;" width="29" height="32" viewBox="0 0 29 32" fill="none" stroke="#c5c5c5" stroke-width="1.25"><path d="M9.8 1.3 H20.5 L27 7.8 V22.8 H9.8 Z" stroke="#9d9d9d" stroke-width="1.6" stroke-linejoin="round"/><path d="M20.3 1.5 V8 H26.8" stroke="#9d9d9d" stroke-width="1.6" stroke-linejoin="round"/><path d="M9.8 9 H1.5 V30.5 H17.5 V23" stroke="#9d9d9d" stroke-width="1.6" stroke-linejoin="round"/></svg>
<div class="a" style="left:30px;top:74px;width:20px;height:20px;border-radius:10px;background:#2f76d2"></div>
<div class="t s" style="left:30px;top:74px;width:20px;height:20px;line-height:20px;text-align:center;font-size:13px;font-weight:bold;color:#fff">1</div>
<svg class="a" style="left:15px;top:119px;" width="30" height="30" viewBox="0 0 30 30" fill="none" stroke="#c5c5c5" stroke-width="1.25"><circle cx="11.1" cy="10.9" r="9.4" stroke="#9d9d9d" stroke-width="1.6"/><path d="M17.8 17.6 L28.5 28.2" stroke="#9d9d9d" stroke-width="1.7"/></svg>
<svg class="a" style="left:17px;top:178px;" width="26" height="32" viewBox="0 0 26 32" fill="none" stroke="#c5c5c5" stroke-width="1.25"><circle cx="6.6" cy="5.4" r="4.1" stroke="#9d9d9d" stroke-width="1.6"/><circle cx="6.6" cy="26.5" r="4.1" stroke="#9d9d9d" stroke-width="1.6"/><circle cx="20" cy="11" r="4.1" stroke="#9d9d9d" stroke-width="1.6"/><path d="M6.6 9.5 V22.4 M20 15.1 V15.8 C20 17.8 18.5 19.3 16.5 19.3 H9.5 C7.8 19.3 6.6 20.5 6.6 22" stroke="#9d9d9d" stroke-width="1.6"/></svg>
<svg class="a" style="left:14px;top:238px;" width="32" height="33" viewBox="0 0 32 33" fill="none" stroke="#c5c5c5" stroke-width="1.25"><path d="M11 1.5 V14 M11 1.5 L30.5 13.5 L17.8 22" stroke="#9d9d9d" stroke-width="1.6" stroke-linejoin="round"/><ellipse cx="8.5" cy="23.8" rx="5.2" ry="6" stroke="#9d9d9d" stroke-width="1.6"/><path d="M3.5 21.2 H13.5 M1.3 18.5 L4.2 20.5 M15.7 18.5 L12.8 20.5 M0.8 24 H3.2 M16.2 24 H13.8 M1.3 30 L4.2 27.5 M15.7 30 L12.8 27.5" stroke="#9d9d9d" stroke-width="1.5"/></svg>
<svg class="a" style="left:17px;top:300px;" width="34" height="28" viewBox="0 0 34 28" fill="none" stroke="#c5c5c5" stroke-width="1.25"><path d="M1.5 3.5 H13.5 V26.6 H1.5 Z M1.5 15.5 H25 V26.6 H13.5" stroke="#9d9d9d" stroke-width="1.6" stroke-linejoin="round"/><path d="M20.6 2.1 L26.8 8.3 L20.6 14.5 L14.4 8.3 Z" stroke="#9d9d9d" stroke-width="1.6" stroke-linejoin="round"/></svg>
<div class="a" style="left:30px;top:314px;width:20px;height:20px;border-radius:10px;background:#2f76d2"></div>
<div class="t s" style="left:30px;top:314px;width:20px;height:20px;line-height:20px;text-align:center;font-size:13px;font-weight:bold;color:#fff">1</div>
<svg class="a" style="left:17px;top:360px;" width="26" height="28" viewBox="0 0 26 28" fill="none" stroke="#c5c5c5" stroke-width="1.25"><path d="M7 1.7 H18.3 M10.3 1.7 V8.5 L1.5 26.3 H24.6 L15.2 8.5 V1.7" stroke="#9d9d9d" stroke-width="1.6" stroke-linejoin="round"/><path d="M5.2 18.4 H20.5" stroke="#9d9d9d" stroke-width="1.6"/></svg>
<svg class="a" style="left:15px;top:418px;" width="31" height="32" viewBox="0 0 31 32" fill="none" stroke="#c5c5c5" stroke-width="1.25"><path d="M15.2 1 C8.5 1 8.8 3.9 8.8 3.9 V7.3 H15.4 V8.3 H5.1 C5.1 8.3 1 7.8 1 15.8 C1 23.8 4.6 23.5 4.6 23.5 H7.4 V19.6 C7.4 19.6 7.2 16 10.9 16 H17.3 C17.3 16 20.7 16.1 20.7 12.7 V5.3 C20.7 5.3 21.2 1 15.2 1 Z" fill="#8e8e8e" stroke="none"/><circle cx="11.9" cy="4.3" r="1.2" fill="#181818" stroke="none"/><path d="M15.8 31 C22.5 31 22.2 28.1 22.2 28.1 V24.7 H15.6 V23.7 H25.9 C25.9 23.7 30 24.2 30 16.2 C30 8.2 26.4 8.5 26.4 8.5 H23.6 V12.4 C23.6 12.4 23.8 16 20.1 16 H13.7 C13.7 16 10.3 15.9 10.3 19.3 V26.7 C10.3 26.7 9.8 31 15.8 31 Z" fill="#8e8e8e" stroke="none"/><circle cx="19.1" cy="27.7" r="1.2" fill="#181818" stroke="none"/></svg>
<svg class="a" style="left:14px;top:934px;" width="32" height="32" viewBox="0 0 32 32" fill="none" stroke="#c5c5c5" stroke-width="1.25"><circle cx="16" cy="16" r="14.6" stroke="#9d9d9d" stroke-width="1.8"/><circle cx="16" cy="12" r="5.3" stroke="#9d9d9d" stroke-width="1.8"/><path d="M6 25.8 C7.5 21.5 11.2 19.5 16 19.5 C20.8 19.5 24.5 21.5 26 25.8" stroke="#9d9d9d" stroke-width="1.8"/></svg>
<svg class="a" style="left:15px;top:996px;" width="29" height="29" viewBox="0 0 29 29" fill="none" stroke="#c5c5c5" stroke-width="1.25"><circle cx="14.5" cy="14.5" r="3.8" stroke="#9d9d9d" stroke-width="1.8"/><path d="M12.3 1.5 H16.7 L17.4 5 L19.7 6.2 L23 4.6 L25.8 7.6 L24 10.8 L24.6 13.3 L27.6 15 L26.5 19 L23 19.3 L21.4 21.5 L21.8 25 L18 26.6 L15.9 23.7 H13.1 L11 26.6 L7.2 25 L7.6 21.5 L6 19.3 L2.5 19 L1.4 15 L4.4 13.3 L5 10.8 L3.2 7.6 L6 4.6 L9.3 6.2 L11.6 5 Z" stroke="#9d9d9d" stroke-width="1.8" stroke-linejoin="round"/></svg>
<div class="a" style="left:30px;top:1010px;width:20px;height:20px;border-radius:10px;background:#2f76d2"></div>
<div class="t s" style="left:30px;top:1010px;width:20px;height:20px;line-height:20px;text-align:center;font-size:13px;font-weight:bold;color:#fff">1</div>
<svg class="a" style="left:15px;top:1045px;" width="14" height="16" viewBox="0 0 14 16" fill="none" stroke="#c5c5c5" stroke-width="1.25"><path d="M1.1 4.3 L6.7 9.3 L1.1 14.9 M12.2 0.2 L6.7 5.3 L12.2 10.3" stroke="#ffffff" stroke-width="1.4"/></svg>
<svg class="a" style="left:53px;top:1045px;" width="17" height="17" viewBox="0 0 17 17" fill="none" stroke="#c5c5c5" stroke-width="1.25"><circle cx="8.3" cy="8.3" r="7.4" stroke="#cccccc" stroke-width="1.4"/><path d="M5.3 5.3 L11.3 11.3 M11.3 5.3 L5.3 11.3" stroke="#cccccc" stroke-width="1.4"/></svg>
<div class="t s" style="left:74.40px;top:1046.00px;font-size:15px;line-height:15px;color:#cccccc;">0</div>
<svg class="a" style="left:87px;top:1045px;" width="17" height="16" viewBox="0 0 17 16" fill="none" stroke="#c5c5c5" stroke-width="1.25"><path d="M8.5 1.2 L16 15 H1 Z" stroke="#cccccc" stroke-width="1.4" stroke-linejoin="round"/><path d="M8.5 6 V10.5 M8.5 12 V13.5" stroke="#cccccc" stroke-width="1.4"/></svg>
<div class="t s" style="left:109.00px;top:1046.00px;font-size:15px;line-height:15px;color:#cccccc;">1</div>
<div class="t s" style="left:1256.60px;top:1048.00px;font-size:13.536px;line-height:13.536px;color:#cccccc;letter-spacing:-0.000px;">Spaces: 4</div>
<div class="t s" style="left:1337.60px;top:1048.00px;font-size:13.5px;line-height:13.5px;color:#cccccc;letter-spacing:-1.256px;">CRLF</div>
<div class="t s" style="left:1391.80px;top:1047.00px;font-size:14.921px;line-height:14.921px;color:#cccccc;letter-spacing:-0.000px;">{ }</div>
<svg class="a" style="left:1426px;top:1046px;" width="21" height="16" viewBox="0 0 21 16" fill="none" stroke="#c5c5c5" stroke-width="1.25"><path d="M1 9.8 C1 6.8 2.8 5.6 4.5 5.6 H16.5 C18.2 5.6 20 6.8 20 9.8 C20 13.2 15.5 15 10.5 15 C5.5 15 1 13.2 1 9.8 Z" fill="#cccccc" stroke="none"/><ellipse cx="7.1" cy="3.2" rx="3" ry="2.5" stroke="#cccccc" stroke-width="1.9" fill="#181818"/><ellipse cx="13.9" cy="3.2" rx="3" ry="2.5" stroke="#cccccc" stroke-width="1.9" fill="#181818"/><rect x="5" y="7.4" width="10.8" height="4.9" rx="0.8" fill="#181818" stroke="none"/><rect x="7.9" y="8.4" width="1.4" height="2.9" fill="#cccccc" stroke="none"/><rect x="12.2" y="8.4" width="1.4" height="2.9" fill="#cccccc" stroke="none"/></svg>
<div class="t s" style="left:1464.70px;top:1047.00px;font-size:14.681px;line-height:14.681px;color:#cccccc;letter-spacing:-0.000px;">Cell 1 of 2</div>
<svg class="a" style="left:1552px;top:1045px;" width="16" height="17" viewBox="0 0 16 17" fill="none" stroke="#c5c5c5" stroke-width="1.25"><path d="M3 12.5 V7.5 C3 4 5 1.5 8 1.5 C11 1.5 13 4 13 7.5 V12.5 L14.8 14 H1.2 Z" stroke="#cccccc" stroke-width="1.4" stroke-linejoin="round"/><path d="M6 15.5 C6.5 16.5 9.5 16.5 10 15.5" stroke="#cccccc" stroke-width="1.4"/></svg>
</body></html>
